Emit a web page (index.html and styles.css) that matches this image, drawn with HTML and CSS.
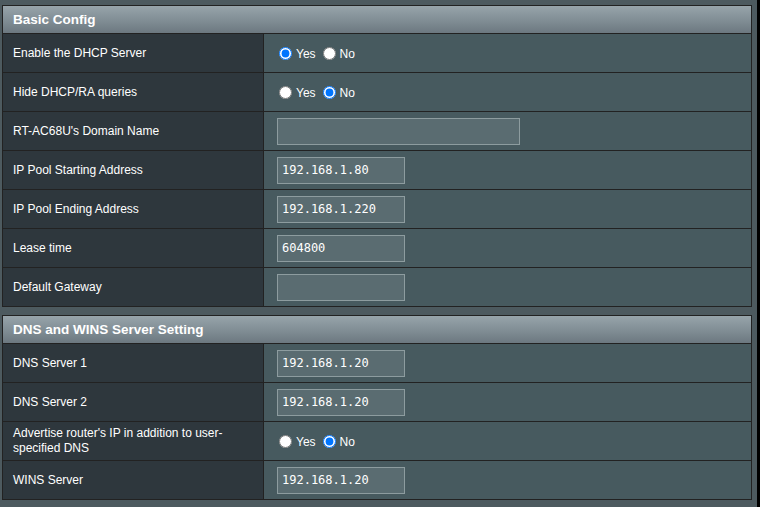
FILE: index.html
```html
<!DOCTYPE html>
<html>
<head>
<meta charset="utf-8">
<link rel="stylesheet" href="styles.css">
</head>
<body>
<div class="page">
  <div class="section">
    <div class="head">Basic Config</div>
    <div class="row">
      <div class="label">Enable the DHCP Server</div>
      <div class="value">
        <label class="opt"><input type="radio" name="dhcp" checked>Yes</label>
        <label class="opt"><input type="radio" name="dhcp">No</label>
      </div>
    </div>
    <div class="row">
      <div class="label">Hide DHCP/RA queries</div>
      <div class="value">
        <label class="opt"><input type="radio" name="hide">Yes</label>
        <label class="opt"><input type="radio" name="hide" checked>No</label>
      </div>
    </div>
    <div class="row">
      <div class="label">RT-AC68U's Domain Name</div>
      <div class="value"><input class="field wide" type="text" value=""></div>
    </div>
    <div class="row">
      <div class="label">IP Pool Starting Address</div>
      <div class="value"><input class="field" type="text" value="192.168.1.80"></div>
    </div>
    <div class="row">
      <div class="label">IP Pool Ending Address</div>
      <div class="value"><input class="field" type="text" value="192.168.1.220"></div>
    </div>
    <div class="row">
      <div class="label">Lease time</div>
      <div class="value"><input class="field" type="text" value="604800"></div>
    </div>
    <div class="row">
      <div class="label">Default Gateway</div>
      <div class="value"><input class="field" type="text" value=""></div>
    </div>
  </div>

  <div class="section">
    <div class="head">DNS and WINS Server Setting</div>
    <div class="row">
      <div class="label">DNS Server 1</div>
      <div class="value"><input class="field" type="text" value="192.168.1.20"></div>
    </div>
    <div class="row">
      <div class="label">DNS Server 2</div>
      <div class="value"><input class="field" type="text" value="192.168.1.20"></div>
    </div>
    <div class="row">
      <div class="label">Advertise router's IP in addition to user-specified DNS</div>
      <div class="value">
        <label class="opt"><input type="radio" name="adv">Yes</label>
        <label class="opt"><input type="radio" name="adv" checked>No</label>
      </div>
    </div>
    <div class="row">
      <div class="label">WINS Server</div>
      <div class="value"><input class="field" type="text" value="192.168.1.20"></div>
    </div>
  </div>
</div>
</body>
</html>
```

FILE: styles.css
```css
html, body {
  margin: 0;
  padding: 0;
}
body {
  width: 760px;
  height: 507px;
  box-sizing: border-box;
  background: #4d5a5f;
  border-right: 3px solid #000;
  overflow: hidden;
  font-family: "Liberation Sans", Arial, sans-serif;
  font-size: 12px;
  color: #fff;
}
.page {
  padding: 5px 0 0 2px;
  display: flex;
  flex-direction: column;
  gap: 8px;
}
.section {
  width: 750px;
  box-sizing: border-box;
  border: 1px solid #222;
}
.head {
  height: 27px;
  border-bottom: 1px solid #222;
  background: linear-gradient(to bottom, #97a4aa 0%, #808d94 55%, #6c7880 100%);
  font-size: 13.5px;
  font-weight: bold;
  color: #fff;
  padding-left: 10px;
  display: flex;
  align-items: center;
}
.row {
  display: grid;
  grid-template-columns: 261px 1fr;
  height: 38px;
}
.row + .row {
  border-top: 1px solid #222;
}
.label {
  background: #2e373d;
  border-right: 1px solid #222;
  padding: 0 10px;
  display: flex;
  align-items: center;
  line-height: 15px;
}
.value {
  background: #475a5f;
  padding-left: 12px;
  display: flex;
  align-items: center;
}
.opt {
  display: inline-flex;
  align-items: center;
  margin-right: 4px;
  padding-top: 2px;
}
.opt input {
  margin: 0 4px 2px 3px;
  width: 13px;
  height: 13px;
}
.field {
  width: 128px;
  height: 27px;
  box-sizing: border-box;
  border: 1px solid #8d9c9f;
  background: #5a6c71;
  color: #fff;
  font-family: "DejaVu Sans Mono", monospace;
  font-size: 12px;
  font-weight: 500;
  padding: 0 0 0 4px;
  margin: 0 0 0 1px;
  outline: none;
}
.field.wide {
  width: 243px;
}
```
